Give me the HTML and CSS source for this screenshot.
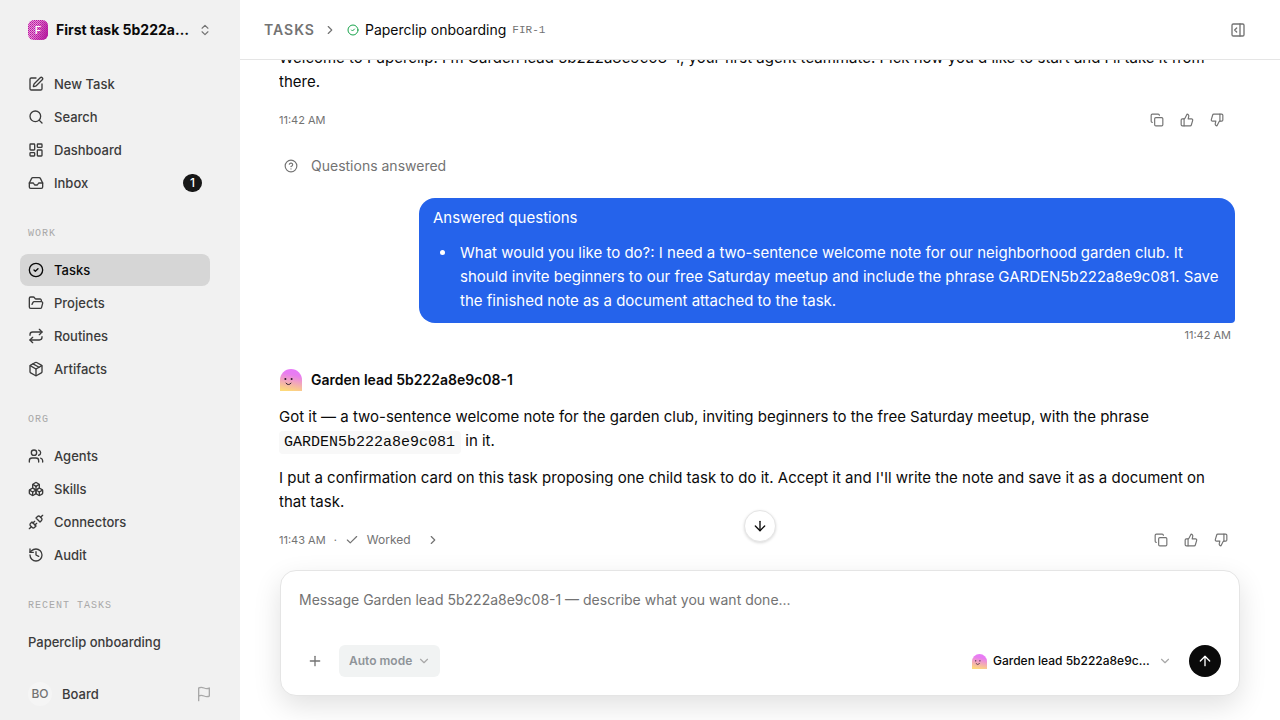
FILE: index.html
```html
<!DOCTYPE html>
<html lang="en">
<head>
  <meta charset="UTF-8">
  <meta name="viewport" content="width=device-width, initial-scale=1.0">
  <title>Paperclip onboarding</title>
  <link rel="stylesheet" href="styles.css">
</head>
<body>
  <svg class="sprite" aria-hidden="true">
    <symbol id="i-pen" viewBox="0 0 24 24"><path d="M12 3H5a2 2 0 0 0-2 2v14a2 2 0 0 0 2 2h14a2 2 0 0 0 2-2v-7"/><path d="M18.375 2.625a1 1 0 0 1 3 3l-9.013 9.014a2 2 0 0 1-.853.505l-2.873.84a.5.5 0 0 1-.62-.62l.84-2.873a2 2 0 0 1 .506-.852z"/></symbol>
    <symbol id="i-search" viewBox="0 0 24 24"><circle cx="11" cy="11" r="8"/><path d="m21 21-4.34-4.34"/></symbol>
    <symbol id="i-dashboard" viewBox="0 0 24 24"><rect x="3" y="3" width="7" height="9" rx="1"/><rect x="14" y="3" width="7" height="5" rx="1"/><rect x="14" y="12" width="7" height="9" rx="1"/><rect x="3" y="16" width="7" height="5" rx="1"/></symbol>
    <symbol id="i-inbox" viewBox="0 0 24 24"><path d="M22 12h-6l-2 3h-4l-2-3H2"/><path d="M5.45 5.11 2 12v6a2 2 0 0 0 2 2h16a2 2 0 0 0 2-2v-6l-3.45-6.89A2 2 0 0 0 16.76 4H7.24a2 2 0 0 0-1.79 1.11z"/></symbol>
    <symbol id="i-check-circle" viewBox="0 0 24 24"><circle cx="12" cy="12" r="10"/><path d="m9 12 2 2 4-4"/></symbol>
    <symbol id="i-folder" viewBox="0 0 24 24"><path d="m6 14 1.5-2.9A2 2 0 0 1 9.24 10H20a2 2 0 0 1 1.94 2.5l-1.54 6a2 2 0 0 1-1.95 1.5H4a2 2 0 0 1-2-2V5a2 2 0 0 1 2-2h3.9a2 2 0 0 1 1.69.9l.81 1.2a2 2 0 0 0 1.67.9H18a2 2 0 0 1 2 2v2"/></symbol>
    <symbol id="i-repeat" viewBox="0 0 24 24"><path d="m17 2 4 4-4 4"/><path d="M3 11v-1a4 4 0 0 1 4-4h14"/><path d="m7 22-4-4 4-4"/><path d="M21 13v1a4 4 0 0 1-4 4H3"/></symbol>
    <symbol id="i-package" viewBox="0 0 24 24"><path d="M11 21.73a2 2 0 0 0 2 0l7-4A2 2 0 0 0 21 16V8a2 2 0 0 0-1-1.73l-7-4a2 2 0 0 0-2 0l-7 4A2 2 0 0 0 3 8v8a2 2 0 0 0 1 1.73z"/><path d="M12 22V12"/><path d="M3.29 7 12 12l8.71-5"/><path d="m7.5 4.27 9 5.15"/></symbol>
    <symbol id="i-users" viewBox="0 0 24 24"><path d="M16 21v-2a4 4 0 0 0-4-4H6a4 4 0 0 0-4 4v2"/><circle cx="9" cy="7" r="4"/><path d="M22 21v-2a4 4 0 0 0-3-3.87"/><path d="M16 3.13a4 4 0 0 1 0 7.75"/></symbol>
    <symbol id="i-boxes" viewBox="0 0 24 24"><path d="M2.97 12.92A2 2 0 0 0 2 14.63v3.24a2 2 0 0 0 .97 1.71l3 1.8a2 2 0 0 0 2.06 0L12 19v-5.5l-5-3-4.03 2.42Z"/><path d="m7 16.5-4.74-2.85"/><path d="m7 16.5 5-3"/><path d="M7 16.5v5.17"/><path d="M12 13.5V19l3.97 2.38a2 2 0 0 0 2.06 0l3-1.8a2 2 0 0 0 .97-1.71v-3.24a2 2 0 0 0-.97-1.71L17 10.5l-5 3Z"/><path d="m17 16.5-5-3"/><path d="m17 16.5 4.74-2.85"/><path d="M17 16.5v5.17"/><path d="M7.97 4.42A2 2 0 0 0 7 6.13v4.37l5 3 5-3V6.13a2 2 0 0 0-.97-1.71l-3-1.8a2 2 0 0 0-2.06 0l-3 1.8Z"/><path d="M12 8 7.26 5.15"/><path d="m12 8 4.74-2.85"/><path d="M12 13.5V8"/></symbol>
    <symbol id="i-unplug" viewBox="0 0 24 24"><path d="m19 5 3-3"/><path d="m2 22 3-3"/><path d="M6.3 20.3a2.4 2.4 0 0 0 3.4 0L12 18l-6-6-2.3 2.3a2.4 2.4 0 0 0 0 3.4Z"/><path d="M7.5 13.5 10 11"/><path d="M10.5 16.5 13 14"/><path d="m12 6 6 6 2.3-2.3a2.4 2.4 0 0 0 0-3.4l-2.6-2.6a2.4 2.4 0 0 0-3.4 0Z"/></symbol>
    <symbol id="i-history" viewBox="0 0 24 24"><path d="M3 12a9 9 0 1 0 9-9 9.75 9.75 0 0 0-6.74 2.74L3 8"/><path d="M3 3v5h5"/><path d="M12 7v5l4 2"/></symbol>
    <symbol id="i-flag" viewBox="0 0 24 24"><path d="M4 15s1-1 4-1 5 2 8 2 4-1 4-1V3s-1 1-4 1-5-2-8-2-4 1-4 1z"/><path d="M4 22v-7"/></symbol>
    <symbol id="i-updown" viewBox="0 0 24 24"><path d="m7 15 5 5 5-5"/><path d="m7 9 5-5 5 5"/></symbol>
    <symbol id="i-right" viewBox="0 0 24 24"><path d="m9 18 6-6-6-6"/></symbol>
    <symbol id="i-down" viewBox="0 0 24 24"><path d="m6 9 6 6 6-6"/></symbol>
    <symbol id="i-panel" viewBox="0 0 24 24"><rect x="3" y="3" width="18" height="18" rx="2"/><path d="M15 3v18"/><path d="m10 15-3-3 3-3"/></symbol>
    <symbol id="i-copy" viewBox="0 0 24 24"><rect x="8" y="8" width="14" height="14" rx="2"/><path d="M4 16c-1.1 0-2-.9-2-2V4c0-1.1.9-2 2-2h10c1.1 0 2 .9 2 2"/></symbol>
    <symbol id="i-up-thumb" viewBox="0 0 24 24"><path d="M7 10v12"/><path d="M15 5.88 14 10h5.83a2 2 0 0 1 1.92 2.56l-2.33 8A2 2 0 0 1 17.5 22H4a2 2 0 0 1-2-2v-8a2 2 0 0 1 2-2h2.76a2 2 0 0 0 1.79-1.11L12 2a3.13 3.13 0 0 1 3 3.88Z"/></symbol>
    <symbol id="i-down-thumb" viewBox="0 0 24 24"><path d="M17 14V2"/><path d="M9 18.12 10 14H4.17a2 2 0 0 1-1.92-2.56l2.33-8A2 2 0 0 1 6.5 2H20a2 2 0 0 1 2 2v8a2 2 0 0 1-2 2h-2.76a2 2 0 0 0-1.79 1.11L12 22a3.13 3.13 0 0 1-3-3.88Z"/></symbol>
    <symbol id="i-help" viewBox="0 0 24 24"><circle cx="12" cy="12" r="10"/><path d="M9.09 9a3 3 0 0 1 5.83 1c0 2-3 3-3 3"/><path d="M12 17h.01"/></symbol>
    <symbol id="i-check" viewBox="0 0 24 24"><path d="M20 6 9 17l-5-5"/></symbol>
    <symbol id="i-plus" viewBox="0 0 24 24"><path d="M5 12h14"/><path d="M12 5v14"/></symbol>
    <symbol id="i-arrow-down" viewBox="0 0 24 24"><path d="M12 5v14"/><path d="m19 12-7 7-7-7"/></symbol>
    <symbol id="i-arrow-up" viewBox="0 0 24 24"><path d="m5 12 7-7 7 7"/><path d="M12 19V5"/></symbol>
    <linearGradient id="face" x1="0.6" y1="0" x2="0.4" y2="1">
      <stop offset="0" stop-color="#e879f9"/>
      <stop offset="0.25" stop-color="#e87df0"/>
      <stop offset="1" stop-color="#fdd97a"/>
    </linearGradient>
    <symbol id="i-avatar" viewBox="0 0 22 22">
      <path class="face" d="M0 22V11a11 11 0 0 1 22 0v11z"/>
      <circle class="eye" cx="5.4" cy="10" r="1"/>
      <circle class="eye" cx="11.6" cy="10" r="1"/>
      <path class="smile" d="M6 14.2q2.4 3 5 0"/>
    </symbol>
  </svg>

  <div class="app">
    <aside class="sidebar">
      <button class="company" type="button">
        <svg class="company-logo" viewBox="0 0 20 20" aria-hidden="true">
          <defs>
            <pattern id="dots" width="2" height="2" patternUnits="userSpaceOnUse">
              <rect width="1" height="1" fill="#b5179e"/>
              <rect x="1" y="1" width="1" height="1" fill="#c23aac"/>
            </pattern>
            <linearGradient id="shade" x1="0" y1="0.3" x2="1" y2="0.7">
              <stop offset="0.35" stop-color="#b5179e" stop-opacity="0"/>
              <stop offset="1" stop-color="#b5179e"/>
            </linearGradient>
          </defs>
          <rect width="20" height="20" fill="#ea8fd8"/>
          <rect width="20" height="20" fill="url(#dots)"/>
          <rect width="20" height="20" fill="url(#shade)"/>
          <text x="10" y="14" text-anchor="middle">F</text>
        </svg>
        <span class="company-name">First task 5b222a8e9c08</span>
        <svg class="icon icon-s"><use href="#i-updown"/></svg>
      </button>

      <nav class="nav">
        <div class="group">
          <a class="item" href="#"><svg class="icon"><use href="#i-pen"/></svg>New Task</a>
          <a class="item" href="#"><svg class="icon"><use href="#i-search"/></svg>Search</a>
          <a class="item" href="#"><svg class="icon"><use href="#i-dashboard"/></svg>Dashboard</a>
          <a class="item" href="#"><svg class="icon"><use href="#i-inbox"/></svg>Inbox<span class="badge">1</span></a>
        </div>
        <div class="group">
          <h2 class="label">WORK</h2>
          <a class="item active" href="#"><svg class="icon"><use href="#i-check-circle"/></svg>Tasks</a>
          <a class="item" href="#"><svg class="icon"><use href="#i-folder"/></svg>Projects</a>
          <a class="item" href="#"><svg class="icon"><use href="#i-repeat"/></svg>Routines</a>
          <a class="item" href="#"><svg class="icon"><use href="#i-package"/></svg>Artifacts</a>
        </div>
        <div class="group">
          <h2 class="label">ORG</h2>
          <a class="item" href="#"><svg class="icon"><use href="#i-users"/></svg>Agents</a>
          <a class="item" href="#"><svg class="icon"><use href="#i-boxes"/></svg>Skills</a>
          <a class="item" href="#"><svg class="icon"><use href="#i-unplug"/></svg>Connectors</a>
          <a class="item" href="#"><svg class="icon"><use href="#i-history"/></svg>Audit</a>
        </div>
        <div class="group">
          <h2 class="label">RECENT TASKS</h2>
          <a class="item" href="#">Paperclip onboarding</a>
        </div>
      </nav>

      <div class="account">
        <button class="user" type="button"><span class="initials">BO</span>Board</button>
        <button class="flag" type="button" aria-label="Send feedback"><svg class="icon"><use href="#i-flag"/></svg></button>
      </div>
    </aside>

    <main class="main">
      <header class="topbar">
        <a class="crumb" href="#">TASKS</a>
        <svg class="icon icon-s sep"><use href="#i-right"/></svg>
        <svg class="icon icon-xs done"><use href="#i-check-circle"/></svg>
        <h1 class="title">Paperclip onboarding</h1>
        <span class="key">FIR-1</span>
        <button class="panel" type="button" aria-label="Open panel"><svg class="icon"><use href="#i-panel"/></svg></button>
      </header>

      <div class="thread">
        <article class="message first">
          <p>Welcome to Paperclip! I'm Garden lead 5b222a8e9c08-1, your first agent teammate. Pick how you'd like to start and I'll take it from there.</p>
          <footer class="meta">
            <time>11:42 AM</time>
            <div class="actions">
              <button type="button" aria-label="Copy"><svg class="icon icon-s"><use href="#i-copy"/></svg></button>
              <button type="button" aria-label="Good response"><svg class="icon icon-s"><use href="#i-up-thumb"/></svg></button>
              <button type="button" aria-label="Bad response"><svg class="icon icon-s"><use href="#i-down-thumb"/></svg></button>
            </div>
          </footer>
        </article>

        <div class="event"><svg class="icon icon-s"><use href="#i-help"/></svg>Questions answered</div>

        <article class="reply">
          <div class="bubble">
            <p>Answered questions</p>
            <ul>
              <li>What would you like to do?: I need a two-sentence welcome note for our neighborhood garden club. It should invite beginners to our free Saturday meetup and include the phrase GARDEN5b222a8e9c081. Save the finished note as a document attached to the task.</li>
            </ul>
          </div>
          <time>11:42 AM</time>
        </article>

        <article class="message">
          <header class="author"><svg class="avatar"><use href="#i-avatar"/></svg>Garden lead 5b222a8e9c08-1</header>
          <p>Got it — a two-sentence welcome note for the garden club, inviting beginners to the free Saturday meetup, with the phrase <code>GARDEN5b222a8e9c081</code> in it.</p>
          <p>I put a confirmation card on this task proposing one child task to do it. Accept it and I'll write the note and save it as a document on that task.</p>
          <footer class="meta">
            <time>11:43 AM</time>
            <span class="dot">·</span>
            <button class="worked" type="button">
              <svg class="icon icon-s"><use href="#i-check"/></svg>
              <span>Worked</span>
              <svg class="icon icon-s more"><use href="#i-right"/></svg>
            </button>
            <div class="actions">
              <button type="button" aria-label="Copy"><svg class="icon icon-s"><use href="#i-copy"/></svg></button>
              <button type="button" aria-label="Good response"><svg class="icon icon-s"><use href="#i-up-thumb"/></svg></button>
              <button type="button" aria-label="Bad response"><svg class="icon icon-s"><use href="#i-down-thumb"/></svg></button>
            </div>
          </footer>
        </article>
      </div>

      <div class="dock">
        <button class="jump" type="button" aria-label="Scroll to latest"><svg class="icon"><use href="#i-arrow-down"/></svg></button>
        <form class="composer">
          <textarea class="draft" rows="1" aria-label="Message" placeholder="Message Garden lead 5b222a8e9c08-1 — describe what you want done..."></textarea>
          <div class="tools">
            <button class="add" type="button" aria-label="Add attachment"><svg class="icon"><use href="#i-plus"/></svg></button>
            <label class="mode">
              <select aria-label="Mode" disabled><option>Auto mode</option></select>
              <svg class="icon icon-s"><use href="#i-down"/></svg>
            </label>
            <label class="assignee">
              <svg class="avatar"><use href="#i-avatar"/></svg>
              <select aria-label="Assignee"><option>Garden lead 5b222a8e9c08-1</option></select>
              <svg class="icon icon-s"><use href="#i-down"/></svg>
            </label>
            <button class="send" type="submit" aria-label="Send"><svg class="icon"><use href="#i-arrow-up"/></svg></button>
          </div>
        </form>
      </div>
    </main>
  </div>
</body>
</html>
```

FILE: styles.css
```css
* {
  box-sizing: border-box;
}
body {
  margin: 0;
  background: #fff;
  color: #0a0a0a;
  font-family: Inter, "Liberation Sans", sans-serif;
  font-size: 15px;
  line-height: 24px;
  overflow: hidden;
}
button, select, textarea {
  font: inherit;
  color: inherit;
  background: none;
  border: 0;
  padding: 0;
  margin: 0;
}
button {
  cursor: pointer;
  display: flex;
  align-items: center;
  justify-content: center;
}
a {
  color: inherit;
  text-decoration: none;
}
h1, h2, p, ul {
  margin: 0;
}
.sprite {
  position: absolute;
  width: 0;
  height: 0;
}
.icon {
  flex: none;
  width: 16px;
  height: 16px;
  fill: none;
  stroke: currentColor;
  stroke-width: 2;
  stroke-linecap: round;
  stroke-linejoin: round;
}
.icon-s {
  width: 14px;
  height: 14px;
}
.icon-xs {
  width: 12px;
  height: 12px;
}
.avatar {
  flex: none;
  width: 22px;
  height: 22px;
}
.face {
  fill: url(#face);
}
.eye {
  fill: #2b1a2b;
}
.smile {
  fill: none;
  stroke: #2b1a2b;
  stroke-width: 1;
  stroke-linecap: round;
}
.app {
  display: flex;
  height: 100vh;
}

/* sidebar */
.sidebar {
  flex: none;
  width: 240px;
  display: flex;
  flex-direction: column;
  background: #f1f1f1;
  color: #3b3b3b;
  font-size: 13px;
  font-weight: 500;
  line-height: 20px;
}
.company {
  height: 60px;
  padding: 0 28px;
  gap: 8px;
  color: #0a0a0a;
  font-size: 14px;
  font-weight: 700;
}
.company .icon {
  color: #737373;
}
.company-logo {
  flex: none;
  width: 20px;
  height: 20px;
  border-radius: 6px;
}
.company-logo text {
  fill: #fff;
  font-size: 11px;
  font-weight: 500;
}
.company-name {
  flex: 1;
  overflow: hidden;
  white-space: nowrap;
  text-overflow: ellipsis;
  text-align: left;
}
.nav {
  flex: 1;
  min-height: 0;
  padding: 8px 30px 0 20px;
  display: flex;
  flex-direction: column;
  gap: 25px;
}
.group {
  display: flex;
  flex-direction: column;
  gap: 1px;
}
.label {
  margin-bottom: 9px;
  padding: 0 8px;
  color: #a8a8a8;
  font-family: "Liberation Mono", monospace;
  font-size: 10px;
  font-weight: 400;
  letter-spacing: 1px;
}
.item {
  height: 32px;
  padding: 0 8px;
  display: flex;
  align-items: center;
  gap: 10px;
  border-radius: 8px;
}
.active {
  background: #d6d6d6;
  color: #0a0a0a;
}
.badge {
  min-width: 19px;
  height: 18px;
  margin-left: auto;
  border-radius: 9px;
  background: #171717;
  color: #fff;
  font-size: 12px;
  line-height: 18px;
  text-align: center;
}
.account {
  height: 52px;
  padding: 0 28px;
  display: flex;
  align-items: center;
  justify-content: space-between;
}
.user {
  gap: 10px;
}
.initials {
  width: 24px;
  height: 24px;
  border-radius: 50%;
  background: #f5f5f5;
  color: #737373;
  font-size: 12px;
  line-height: 24px;
}
.flag {
  color: #a8a8a8;
}

/* top bar */
.main {
  flex: 1;
  min-width: 0;
  display: flex;
  flex-direction: column;
}
.topbar {
  flex: none;
  height: 60px;
  padding: 0 34px 0 24px;
  display: flex;
  align-items: center;
  gap: 6px;
  border-bottom: 1px solid #e5e5e5;
  font-size: 14px;
}
.crumb {
  color: #737373;
  font-weight: 600;
  letter-spacing: 1px;
}
.sep {
  margin: 0 4px 0 2px;
  color: #737373;
}
.done {
  color: #16a34a;
}
.title {
  font-size: 14px;
  font-weight: 400;
}
.key {
  color: #737373;
  font-family: "Liberation Mono", monospace;
  font-size: 11px;
}
.panel {
  margin-left: auto;
  color: #737373;
}

/* conversation, held to its latest message */
.thread {
  flex: 1;
  min-height: 0;
  overflow: hidden;
  width: 100%;
  max-width: 962px;
  margin: 0 auto;
  padding: 0 6px 18px 0;
  display: flex;
  flex-direction: column;
  justify-content: flex-end;
}
.message p + p {
  margin-top: 13px;
}
.message code {
  padding: 3px 6px 3px 5px;
  border-radius: 4px;
  background: #f8f8f8;
  font-family: "Liberation Mono", monospace;
  font-size: 15px;
  line-height: 16px;
}
.meta {
  margin-top: 14px;
  display: flex;
  align-items: center;
  color: #737373;
}
time {
  color: #737373;
  font-size: 11px;
}
.dot {
  margin: 0 8px;
  font-size: 11px;
}
.worked {
  gap: 8px;
  font-size: 12px;
}
.more {
  margin-left: 7px;
}
.actions {
  margin-left: auto;
  padding-right: 7px;
  display: flex;
  gap: 16px;
}
.first .actions {
  padding-right: 11px;
}
.event {
  margin: 22px 0 20px;
  padding-left: 5px;
  display: flex;
  align-items: center;
  gap: 13px;
  color: #737373;
  font-size: 14px;
}
.reply {
  display: flex;
  flex-direction: column;
  align-items: flex-end;
}
.bubble {
  max-width: 816px;
  padding: 8px 14px 10px;
  border-radius: 16px 16px 4px 16px;
  background: #2563eb;
  color: #fff;
}
.bubble ul {
  margin-top: 11px;
  padding-left: 24px;
}
.bubble li {
  padding-left: 3px;
}
.reply time {
  padding-right: 4px;
}
.author {
  margin: 21px 0 13px;
  padding-left: 1px;
  display: flex;
  align-items: center;
  gap: 9px;
  font-size: 14px;
  font-weight: 600;
}

/* composer */
.dock {
  position: relative;
  padding: 0 40px 24px;
}
.jump {
  position: absolute;
  top: -60px;
  left: 50%;
  margin-left: -16px;
  width: 32px;
  height: 32px;
  border: 1px solid #e5e5e5;
  border-radius: 50%;
  background: #fff;
  box-shadow: 0 1px 3px rgba(0, 0, 0, 0.15);
}
.composer {
  max-width: 960px;
  margin: 0 auto;
  padding: 17px 18px 18px;
  border: 1px solid #e5e5e5;
  border-radius: 16px;
  background: #fff;
  box-shadow: 0 10px 28px rgba(0, 0, 0, 0.12);
}
.draft {
  display: block;
  width: 100%;
  height: 57px;
  outline: 0;
  resize: none;
  font-size: 14px;
}
.draft::placeholder {
  color: #737373;
}
.tools {
  display: flex;
  align-items: center;
  gap: 8px;
  font-size: 12px;
  font-weight: 500;
}
.add {
  width: 32px;
  height: 32px;
  color: #737373;
}
.mode, .assignee {
  height: 32px;
  display: flex;
  align-items: center;
}
.tools select {
  appearance: none;
  outline: 0;
  opacity: 1;
  overflow: hidden;
  white-space: nowrap;
  text-overflow: ellipsis;
}
.mode {
  padding: 0 9px 0 10px;
  gap: 4px;
  border-radius: 6px;
  background: #f1f3f3;
  color: #8f9499;
  font-weight: 600;
}
.assignee {
  margin-left: auto;
  margin-right: 9px;
  gap: 6px;
}
.assignee select {
  width: 159px;
}
.assignee .avatar {
  width: 15px;
  height: 15px;
}
.mode .icon, .assignee .icon {
  color: #a8a8a8;
}
.send {
  width: 32px;
  height: 32px;
  border-radius: 50%;
  background: #0a0a0a;
  color: #fff;
}
```
